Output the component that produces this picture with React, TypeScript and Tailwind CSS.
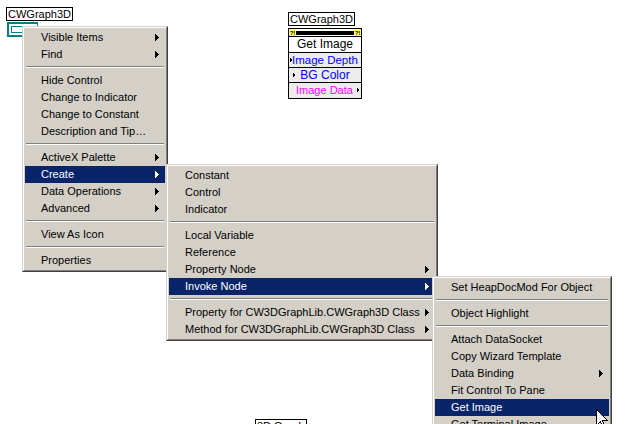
import clsx from "clsx";

type Item = { label?: string; sub?: boolean; active?: boolean; sep?: boolean };

const FONT = "font-['Liberation_Sans','Arial',sans-serif]";

function Arrow({ white }: { white?: boolean }) {
  const c = white ? "#ffffff" : "#000000";
  return (
    <svg width="4" height="7" viewBox="0 0 4 7" shapeRendering="crispEdges" className="absolute right-[6px] top-[5px]">
      <rect x="0" y="0" width="1" height="7" fill={c} />
      <rect x="1" y="1" width="1" height="5" fill={c} />
      <rect x="2" y="2" width="1" height="3" fill={c} />
      <rect x="3" y="3" width="1" height="1" fill={c} />
    </svg>
  );
}

function Menu({ items, className }: { items: Item[]; className: string }) {
  return (
    <div
      className={clsx(
        "absolute bg-[#d4d0c8] border border-t-[#d4d0c8] border-l-[#d4d0c8] border-r-[#404040] border-b-[#404040]",
        className,
      )}
    >
      <div className="border border-t-white border-l-white border-r-[#808080] border-b-[#808080] p-px">
        {items.map((it, i) =>
          it.sep ? (
            <div key={i} className="h-[9px] pt-[3px] px-px">
              <div className="h-px bg-[#808080]" />
              <div className="h-px bg-white" />
            </div>
          ) : (
            <div
              key={i}
              className={clsx(
                "relative h-[17px] pl-[16px] pr-[20px] text-[11px] leading-[17px] whitespace-nowrap",
                it.active ? "bg-[#0a246a] text-white" : "text-black",
              )}
            >
              {it.label}
              {it.sub && <Arrow white={it.active} />}
            </div>
          ),
        )}
      </div>
    </div>
  );
}

const mainItems: Item[] = [
  { label: "Visible Items", sub: true },
  { label: "Find", sub: true },
  { sep: true },
  { label: "Hide Control" },
  { label: "Change to Indicator" },
  { label: "Change to Constant" },
  { label: "Description and Tip…" },
  { sep: true },
  { label: "ActiveX Palette", sub: true },
  { label: "Create", sub: true, active: true },
  { label: "Data Operations", sub: true },
  { label: "Advanced", sub: true },
  { sep: true },
  { label: "View As Icon" },
  { sep: true },
  { label: "Properties" },
];

const createItems: Item[] = [
  { label: "Constant" },
  { label: "Control" },
  { label: "Indicator" },
  { sep: true },
  { label: "Local Variable" },
  { label: "Reference" },
  { label: "Property Node", sub: true },
  { label: "Invoke Node", sub: true, active: true },
  { sep: true },
  { label: "Property for CW3DGraphLib.CWGraph3D Class", sub: true },
  { label: "Method for CW3DGraphLib.CWGraph3D Class", sub: true },
];

const invokeItems: Item[] = [
  { label: "Set HeapDocMod For Object" },
  { sep: true },
  { label: "Object Highlight" },
  { sep: true },
  { label: "Attach DataSocket" },
  { label: "Copy Wizard Template" },
  { label: "Data Binding", sub: true },
  { label: "Fit Control To Pane" },
  { label: "Get Image", active: true },
  { label: "Get Terminal Image" },
];

function Tri({ className }: { className: string }) {
  return (
    <svg width="2" height="4" viewBox="0 0 2 4" shapeRendering="crispEdges" className={className}>
      <rect x="0" y="0" width="1" height="4" fill="#000" />
      <rect x="1" y="1" width="1" height="2" fill="#000" />
    </svg>
  );
}

function InvokeNodeBlock() {
  return (
    <div className="absolute left-[288px] top-[10px] text-[12px]">
      <div className="inline-block h-[14px] border border-black bg-white px-px text-[11px] leading-[12px]">CWGraph3D</div>
      <div className="w-[74px] border border-black bg-white">
        <div className="flex h-[8px] items-center justify-between border-b border-black bg-[#fffff0]">
          <div className="flex h-[7px] w-[7px] items-center justify-center bg-[#ffff66] text-[6px] font-bold leading-none">?!</div>
          <div className="h-[4px] flex-1 bg-black" />
          <div className="flex h-[7px] w-[7px] items-center justify-center bg-[#ffff66] text-[6px] font-bold leading-none">?!</div>
        </div>
        <div className="h-[16px] border-b border-black text-center leading-[15px]">Get Image</div>
        <div className="relative h-[15px] border-b border-black bg-[#ececec] pl-[3px] text-[11.5px] leading-[14px] text-[#0000ff]">
          <Tri className="absolute left-[1px] top-[5px]" />
          Image Depth
        </div>
        <div className="relative h-[15px] border-b border-black bg-[#ececec] text-center leading-[14px] text-[#0000ff]">
          <Tri className="absolute left-[4px] top-[5px]" />
          BG Color
        </div>
        <div className="relative h-[15px] bg-[#ececec] pl-[7px] text-[11px] leading-[14px] text-[#ff00ff]">
          Image Data
          <Tri className="absolute right-[2px] top-[5px]" />
        </div>
      </div>
    </div>
  );
}

function Cursor() {
  return (
    <svg width="12" height="20" viewBox="0 0 12 20" className="absolute left-[596px] top-[409px]" shapeRendering="crispEdges">
      <path d="M0.5 0.5 L0.5 16.5 L4.5 12.5 L7.5 19.5 L9.5 18.5 L6.5 11.5 L11.5 11.5 Z" fill="#fff" stroke="#000" strokeWidth="1" />
    </svg>
  );
}

export default function App() {
  return (
    <div className={clsx("relative h-[424px] w-[632px] overflow-hidden bg-white text-black", FONT)}>
      {/* front panel control label + terminal */}
      <div className="absolute left-[6px] top-[7px] h-[14px] border border-black bg-white px-px text-[11px] leading-[12px]">
        CWGraph3D
      </div>
      <div className="absolute left-[7px] top-[22px] flex h-[15px] w-[31px] bg-[#008080] p-[2px]">
        <div className="flex flex-1 items-start gap-[2px] bg-white p-[2px]">
          <div className="h-[7px] w-[17px] border border-[#008080]" />
          <div className="h-[5px] w-[5px] bg-[#8fc7c7]" />
        </div>
      </div>

      <InvokeNodeBlock />

      <div className="absolute left-[255px] top-[419px] h-[14px] border border-black bg-white px-px text-[11px] leading-[12px]">
        3D Graph
      </div>

      <Menu items={mainItems} className="left-[22px] top-[26px] w-[146px]" />
      <Menu items={createItems} className="left-[166px] top-[164px] w-[272px]" />
      <Menu items={invokeItems} className="left-[432px] top-[276px] w-[180px]" />
      <Cursor />
    </div>
  );
}
